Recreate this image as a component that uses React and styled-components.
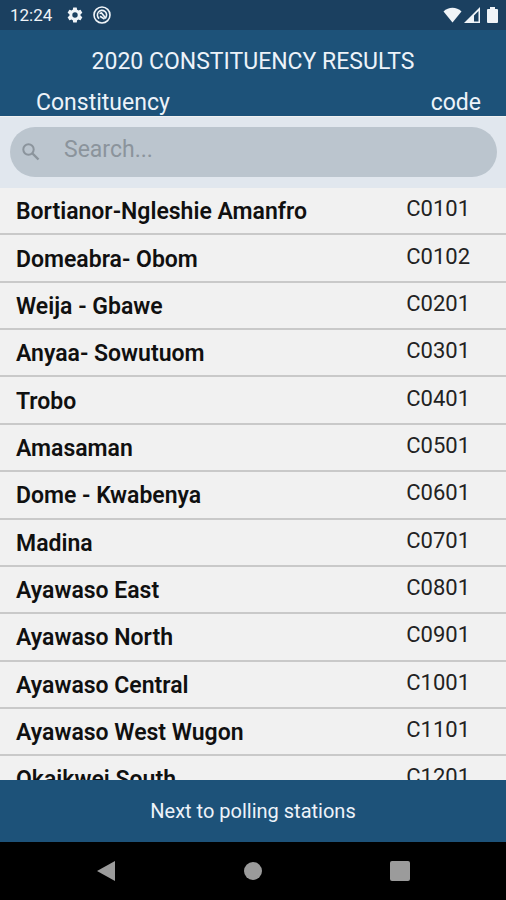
import { useState } from "react";
import styled, { createGlobalStyle } from "styled-components";

const GlobalStyle = createGlobalStyle`
  * {
    box-sizing: border-box;
  }

  body {
    margin: 0;
    font-family: Roboto, "Liberation Sans", sans-serif;
    background: #f1f1f1;
  }
`;

const Screen = styled.div`
  display: flex;
  flex-direction: column;
  height: 100vh;
  overflow: hidden;
`;

const StatusBar = styled.div`
  display: flex;
  align-items: center;
  justify-content: space-between;
  height: 30px;
  padding: 0 8px 0 10px;
  background: #1b4060;
  color: #f0f4f8;
  font-size: 17px;
`;

const StatusGroup = styled.div`
  display: flex;
  align-items: center;
  gap: ${({ $gap }) => $gap}px;

  svg {
    display: block;
  }
`;

const Title = styled.h1`
  margin: 0;
  padding: 17px 0 11px;
  background: #1d5279;
  color: #edf3f9;
  font-size: 23px;
  font-weight: 400;
  line-height: 30px;
  text-align: center;
`;

const Results = styled.table`
  display: flex;
  flex-direction: column;
  flex: 1;
  min-height: 0;

  thead {
    display: block;
  }

  tbody {
    display: flex;
    flex-direction: column;
    flex: 1;
    min-height: 0;
    overflow-y: auto;
    scrollbar-width: none;
  }
`;

const HeadRow = styled.tr`
  display: flex;
  justify-content: space-between;
  height: 28px;
  padding: 0 25px 0 36px;
  background: #1d5279;
  color: #edf3f9;
`;

const HeadCell = styled.th`
  padding: 0;
  font-size: 23px;
  font-weight: 400;
  line-height: 30px;
`;

const SearchRow = styled.tr`
  display: flex;
  padding: 10px 9px 11px 10px;
  border-top: 1px solid #f1f1f1;
  background: #e1e7ee;
`;

const SearchCell = styled.td`
  flex: 1;
  padding: 0;
`;

const SearchBox = styled.label`
  display: flex;
  align-items: center;
  gap: 24px;
  height: 50px;
  padding: 0 12px;
  border-radius: 25px;
  background: #bbc5ce;
  color: #8b949c;

  svg {
    flex: none;
  }
`;

const SearchInput = styled.input`
  flex: 1;
  min-width: 0;
  padding: 0 0 4px;
  border: 0;
  outline: 0;
  background: transparent;
  color: #222;
  font: inherit;
  font-size: 23px;
  line-height: 28px;

  &::placeholder {
    color: #8b949c;
    opacity: 1;
  }
`;

const Row = styled.tr`
  display: flex;
  flex: 0 0 8%;
  align-items: center;
  justify-content: space-between;
  padding: 0 36px 0 16px;
  border-bottom: 2px solid #c9c9c9;
  background: #f1f1f1;
`;

const Name = styled.td`
  padding: 3px 0 0;
  color: #101010;
  font-size: 23px;
  font-weight: 600;
  line-height: 28px;
`;

const Code = styled.td`
  padding: 0 0 3px;
  color: #222;
  font-size: 22px;
  font-weight: 400;
  line-height: 28px;
`;

const NextButton = styled.button`
  height: 62px;
  padding: 0;
  border: 0;
  background: #1d5279;
  color: #edf3f9;
  font: inherit;
  font-size: 20px;
  cursor: pointer;
`;

const NavBar = styled.nav`
  display: flex;
  align-items: center;
  justify-content: space-around;
  height: 58px;
  padding: 0 33px;
  background: #000;
`;

const NavButton = styled.button`
  display: flex;
  justify-content: center;
  width: 22px;
  padding: 0;
  border: 0;
  background: transparent;
  color: #9b9b9b;
`;

const constituencies = [
  { name: "Bortianor-Ngleshie Amanfro", code: "C0101" },
  { name: "Domeabra- Obom", code: "C0102" },
  { name: "Weija - Gbawe", code: "C0201" },
  { name: "Anyaa- Sowutuom", code: "C0301" },
  { name: "Trobo", code: "C0401" },
  { name: "Amasaman", code: "C0501" },
  { name: "Dome - Kwabenya", code: "C0601" },
  { name: "Madina", code: "C0701" },
  { name: "Ayawaso East", code: "C0801" },
  { name: "Ayawaso North", code: "C0901" },
  { name: "Ayawaso Central", code: "C1001" },
  { name: "Ayawaso West Wugon", code: "C1101" },
  { name: "Okaikwei South", code: "C1201" },
];

const GearIcon = () => (
  <svg width="18" height="18" viewBox="0 0 24 24" fill="currentColor">
    <path d="M19.4 13a7.5 7.5 0 0 0 0-2l2.1-1.6a.5.5 0 0 0 .1-.7l-2-3.4a.5.5 0 0 0-.6-.2l-2.5 1a7.3 7.3 0 0 0-1.7-1l-.4-2.7a.5.5 0 0 0-.5-.4h-4a.5.5 0 0 0-.4.4l-.4 2.7a7.6 7.6 0 0 0-1.7 1l-2.5-1a.5.5 0 0 0-.6.2l-2 3.4a.5.5 0 0 0 .2.7L4.6 11a7.5 7.5 0 0 0 0 2l-2.1 1.6a.5.5 0 0 0-.2.7l2 3.4a.5.5 0 0 0 .6.2l2.5-1a7.3 7.3 0 0 0 1.7 1l.4 2.7a.5.5 0 0 0 .4.4h4a.5.5 0 0 0 .5-.4l.4-2.7a7.6 7.6 0 0 0 1.7-1l2.5 1a.5.5 0 0 0 .6-.2l2-3.4a.5.5 0 0 0-.1-.7zM12 15.6a3.6 3.6 0 1 1 0-7.2 3.6 3.6 0 0 1 0 7.2z" />
  </svg>
);

const SyncIcon = () => (
  <svg width="18" height="18" viewBox="0 0 18 18" fill="none" stroke="currentColor">
    <circle cx="9" cy="9" r="8" strokeWidth="1.6" />
    <path d="M6.2 12.6A4.6 4.6 0 1 1 12.6 11.8" strokeWidth="1.6" />
    <path d="M6.5 7.5 8.5 7l4.5 5.5M7 10.2l4.5 2.8" strokeWidth="1.6" />
  </svg>
);

const WifiIcon = () => (
  <svg width="19" height="16" viewBox="0 0 19 16" fill="currentColor">
    <path d="M.5 4.5C5.5-.5 13.5-.5 18.5 4.5l-9 11z" />
  </svg>
);

const SignalIcon = () => (
  <svg width="16" height="16" viewBox="0 0 16 16" fill="currentColor">
    <path fillRule="evenodd" d="M0 16 16 0v16zM10 8.5v6h4.5V4z" />
  </svg>
);

const BatteryIcon = () => (
  <svg width="11" height="16" viewBox="0 0 11 16" fill="currentColor">
    <path d="M3 0h5v2h2q1 0 1 1v12q0 1-1 1H1q-1 0-1-1V3q0-1 1-1h2z" />
  </svg>
);

const SearchIcon = () => (
  <svg width="18" height="18" viewBox="0 0 18 18" fill="none" stroke="currentColor">
    <circle cx="6.5" cy="6.5" r="5.2" strokeWidth="2" />
    <path d="M10.5 10.5 16.5 16.5" strokeWidth="2.4" />
  </svg>
);

const App = () => {
  const [query, setQuery] = useState("");

  const rows = constituencies.filter(({ name }) =>
    name.toLowerCase().includes(query.toLowerCase())
  );

  return (
    <Screen>
      <GlobalStyle />
      <StatusBar>
        <StatusGroup $gap={14}>
          <span>12:24</span>
          <StatusGroup $gap={9}>
            <GearIcon />
            <SyncIcon />
          </StatusGroup>
        </StatusGroup>
        <StatusGroup $gap={2}>
          <WifiIcon />
          <StatusGroup $gap={7}>
            <SignalIcon />
            <BatteryIcon />
          </StatusGroup>
        </StatusGroup>
      </StatusBar>
      <Title>2020 CONSTITUENCY RESULTS</Title>
      <Results>
        <thead>
          <HeadRow>
            <HeadCell scope="col">Constituency</HeadCell>
            <HeadCell scope="col">code</HeadCell>
          </HeadRow>
          <SearchRow>
            <SearchCell colSpan={2}>
              <SearchBox>
                <SearchIcon />
                <SearchInput
                  type="text"
                  aria-label="Search"
                  placeholder="Search..."
                  value={query}
                  onChange={(e) => setQuery(e.target.value)}
                />
              </SearchBox>
            </SearchCell>
          </SearchRow>
        </thead>
        <tbody>
          {rows.map(({ name, code }) => (
            <Row key={code}>
              <Name>{name}</Name>
              <Code>{code}</Code>
            </Row>
          ))}
        </tbody>
      </Results>
      <NextButton type="button">Next to polling stations</NextButton>
      <NavBar>
        <NavButton type="button" aria-label="Back">
          <svg width="18" height="20" viewBox="0 0 18 20" fill="currentColor">
            <path d="M0 10 18 0v20z" />
          </svg>
        </NavButton>
        <NavButton type="button" aria-label="Home">
          <svg width="18" height="18" viewBox="0 0 18 18" fill="currentColor">
            <circle cx="9" cy="9" r="9" />
          </svg>
        </NavButton>
        <NavButton type="button" aria-label="Recent apps">
          <svg width="20" height="20" viewBox="0 0 20 20" fill="currentColor">
            <rect width="20" height="20" rx="2" />
          </svg>
        </NavButton>
      </NavBar>
    </Screen>
  );
};

export default App;
